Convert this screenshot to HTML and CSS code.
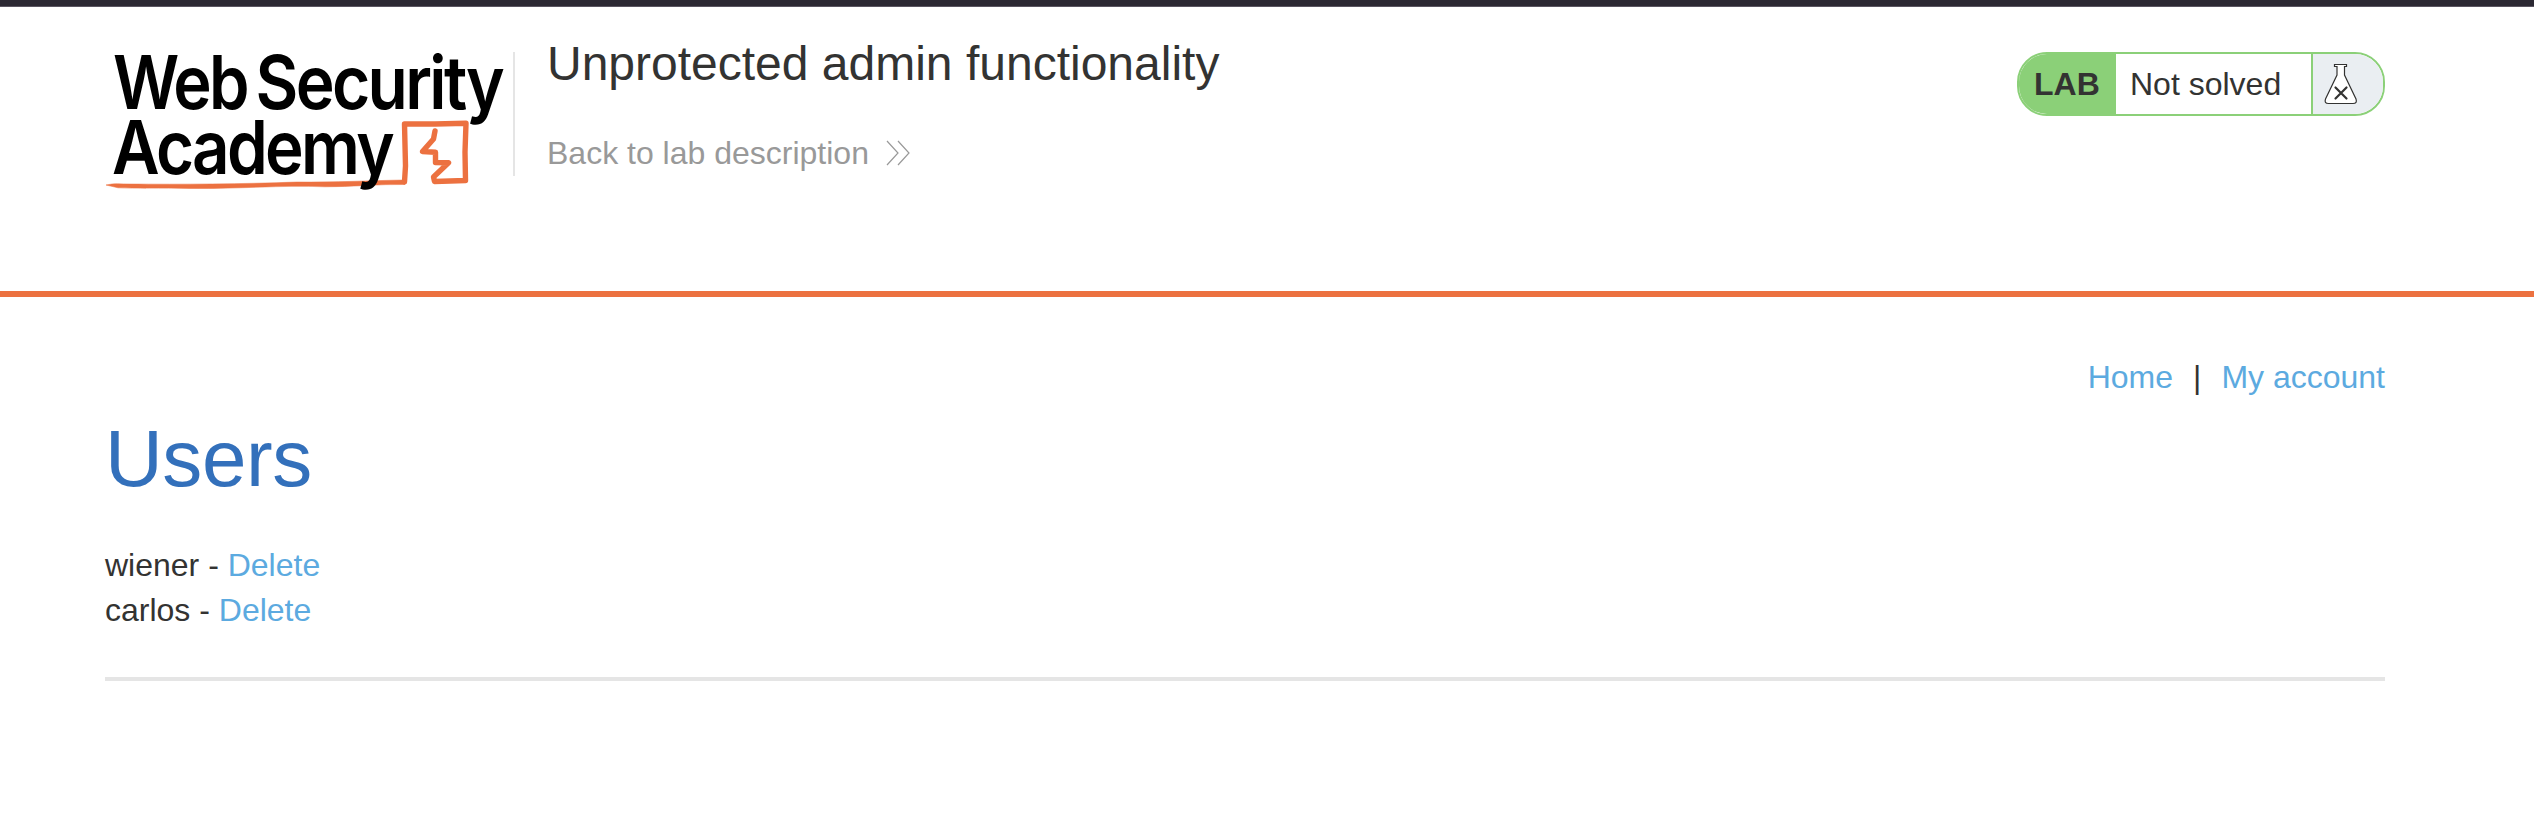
FILE: index.html
```html
<!DOCTYPE html>
<html lang="en">
<head>
<meta charset="utf-8">
<title>Unprotected admin functionality</title>
<link rel="stylesheet" href="styles.css">
</head>
<body>
<div class="topbar"></div>
<header class="lab-header">
  <svg class="logo" viewBox="105 52 400 144" role="img" aria-label="Web Security Academy">
    <path class="logo-underline" d="M106 185 C114 183 121 184 129 184 C180 184.500 245 184 297 182 C335 182.500 370 180.500 404 180 L405 184.500 C380 184 350 187 325 186.800 C280 185 240 189 190 188.500 C160 188 135 188.500 118 187.800 Z"/>
    <path class="logo-line" d="M404.500 181.800 L405.500 166 L404.500 124 L435 124 L466 123.300 L465 152 L465.500 180.500 L450 181 L434.500 181.500 L433.500 177 L448.500 162.700 L435.500 162.500 L435.500 152.300 L422.500 151.500 L433.500 139 L435 131"/>
    <g class="logo-text">
      <text x="113" y="109.300" textLength="134" lengthAdjust="spacingAndGlyphs">Web</text>
      <text x="255.500" y="109.300" textLength="246.500" lengthAdjust="spacingAndGlyphs">Security</text>
      <text x="112" y="174.200" textLength="280" lengthAdjust="spacingAndGlyphs">Academy</text>
    </g>
  </svg>
  <div class="title-block">
    <h2 class="title">Unprotected admin functionality</h2>
    <a class="back">Back to lab description
      <svg class="chevrons" viewBox="0 0 24 26"><path d="M1 1 L12 13 L1 25 M12 1 L23 13 L12 25"/></svg>
    </a>
  </div>
  <div class="badge">
    <span class="badge-lab">LAB</span>
    <span class="badge-status">Not solved</span>
    <span class="badge-icon">
      <svg class="flask" viewBox="0 0 34 42">
        <path class="flask-body" d="M10.500 1.500 H22.500 V3.500 H20.500 V12 L32 36 Q33.500 40.500 29 40.500 H4.500 Q0 40.500 1.500 36 L13 12 V3.500 H10.500 Z"/>
        <path class="flask-cross" d="M11.500 24.500 L22.500 35.500 M22.500 24.500 L11.500 35.500"/>
      </svg>
    </span>
  </div>
</header>
<main class="content">
  <nav class="nav"><a class="link">Home</a><span>|</span><a class="link">My account</a></nav>
  <h1 class="heading">Users</h1>
  <div class="user">wiener - <a class="link">Delete</a></div>
  <div class="user">carlos - <a class="link">Delete</a></div>
  <hr class="rule">
</main>
</body>
</html>
```
FILE: styles.css
```css
* { box-sizing: border-box; }
body {
  margin: 0;
  background: #fff;
  color: #333332;
  font-family: "Liberation Sans", Arial, sans-serif;
  font-size: 32px;
  line-height: 45px;
}
.topbar { height: 7px; background: #2b2833; border-bottom: 1px solid #5a5561; }
.lab-header {
  display: flex;
  align-items: flex-start;
  height: 290px;
  padding: 45px 149px 0 105px;
  border-bottom: 6px solid #ec7140;
}
.logo { flex: none; width: 400px; height: 144px; overflow: visible; }
.logo-text {
  font-family: Inter, Roboto, sans-serif;
  font-size: 74px;
  font-weight: 600;
  letter-spacing: -3px;
  fill: #000;
}
.logo-underline { fill: #ec7140; stroke: #ec7140; stroke-width: .5; }
.logo-line { fill: none; stroke: #ec7140; stroke-width: 5.400; stroke-linejoin: round; stroke-linecap: round; }
.title-block {
  display: flex;
  flex-direction: column;
  flex: 1;
  height: 124px;
  margin-left: 8px;
  padding-left: 32px;
  border-left: 2px solid #e5e5e5;
}
.title { margin: -16px 0 0; font-size: 48px; font-weight: 400; line-height: 56px; }
.back { display: flex; align-items: center; gap: 17px; margin-top: 39px; color: #999; }
.chevrons { width: 24px; height: 26px; margin-top: -2px; fill: none; stroke: #999; stroke-width: 1.200; }
.badge {
  display: flex;
  width: 368px;
  height: 64px;
  overflow: hidden;
  border: 2px solid #8bd078;
  border-radius: 30px;
  background: #fff;
  line-height: 61px;
}
.badge-lab { width: 97px; padding-left: 15px; background: #8bd078; font-weight: 700; }
.badge-status { width: 195px; padding-left: 14px; }
.badge-icon { flex: 1; padding: 9px 0 0 11px; border-left: 2px solid #8bd078; background: #eaeef2; }
.flask { display: block; width: 34px; height: 42px; }
.flask-body { fill: #fff; stroke: #333332; stroke-width: 1.200; }
.flask-cross { fill: none; stroke: #333332; stroke-width: 2.200; stroke-linecap: round; }
.content { padding: 57px 149px 0 105px; }
.nav { display: flex; justify-content: flex-end; gap: 20px; line-height: 46px; }
.link { color: #5caae0; }
.heading { margin: 14px 0 39px; font-size: 80px; font-weight: 400; line-height: 90px; letter-spacing: -.4px; color: #3370bb; }
.user { height: 45px; }
.rule { height: 4px; margin: 44px 0 0; border: 0; background: #e5e5e5; }
```
